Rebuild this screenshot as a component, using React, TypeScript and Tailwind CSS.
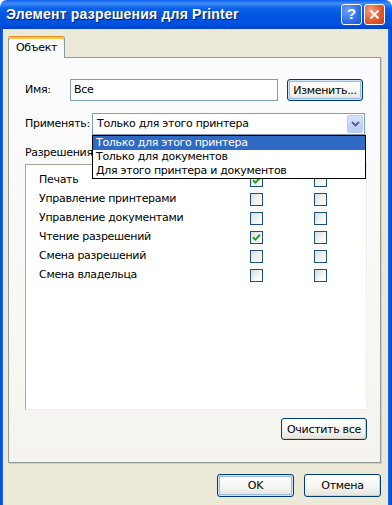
import React from 'react';

const rows = [
  { label: 'Печать', allow: true },
  { label: 'Управление принтерами', allow: false },
  { label: 'Управление документами', allow: false },
  { label: 'Чтение разрешений', allow: true },
  { label: 'Смена разрешений', allow: false },
  { label: 'Смена владельца', allow: false },
];

const options = ['Только для этого принтера', 'Только для документов', 'Для этого принтера и документов'];

const XpButton: React.FC<{ label: string; w: string; focused?: boolean }> = ({ label, w, focused }) => (
  <button
    type="button"
    className={`${w} h-[22px] rounded-[3px] border border-[#003C74] bg-[linear-gradient(to_bottom,#FFFFFF_0%,#F4F4F0_60%,#E3E2DA_100%)] text-[11px] text-black leading-none ${
      focused ? 'shadow-[inset_0_0_0_1px_#CEE7FF,inset_0_0_0_2px_#98B8EA]' : 'shadow-[inset_-1px_-1px_0_#D6D0C5]'
    }`}
  >
    {label}
  </button>
);

const CheckBox: React.FC<{ checked?: boolean }> = ({ checked }) => (
  <div className="w-[13px] h-[13px] border border-[#1C5180] bg-[linear-gradient(135deg,#DCDCD7_0%,#F5F5F3_60%,#FFFFFF_100%)] flex items-center justify-center">
    {checked && (
      <svg width="9" height="9" viewBox="0 0 9 9">
        <path d="M1 4.2 L3.4 6.6 L8 1.8" stroke="#21A121" strokeWidth="2" fill="none" />
      </svg>
    )}
  </div>
);

const App: React.FC = () => {
  return (
    <div className="w-[392px] h-[505px] overflow-hidden flex flex-col font-['DejaVu_Sans',sans-serif] text-[11px] tracking-[-0.3px] text-black select-none">
      {/* Title bar */}
      <div className="h-[29px] shrink-0 flex items-center pl-[6px] pr-[7px] rounded-t-[7px] bg-[linear-gradient(to_bottom,#0A5EEA_0%,#3F8CF8_12%,#0B63EA_28%,#0054E3_55%,#0051DE_85%,#0042C8_100%)]">
        <span className="flex-1 font-['Liberation_Sans',sans-serif] font-bold text-[14px] text-white [text-shadow:1px_1px_0_#0A1E6E] tracking-[0.2px]">
          Элемент разрешения для Printer
        </span>
        <div className="flex gap-[2px]">
          <div className="w-[21px] h-[21px] rounded-[3px] border border-white bg-[radial-gradient(circle_at_30%_30%,#6FA3F7_0%,#2E6CE8_60%,#1E54D2_100%)] flex items-center justify-center text-white font-bold text-[15px] font-['Liberation_Sans',sans-serif]">
            ?
          </div>
          <div className="w-[21px] h-[21px] rounded-[3px] border border-white bg-[radial-gradient(circle_at_30%_30%,#F0A080_0%,#E25A2C_55%,#C9401A_100%)] flex items-center justify-center">
            <svg width="11" height="11" viewBox="0 0 11 11">
              <path d="M1.5 1.5 L9.5 9.5 M9.5 1.5 L1.5 9.5" stroke="white" strokeWidth="2.2" />
            </svg>
          </div>
        </div>
      </div>

      {/* Body */}
      <div className="flex flex-1 min-h-0">
        <div className="w-[3px] bg-[linear-gradient(to_right,#0844C8,#166AEE)]" />
        <div className="flex-1 bg-[#ECE9D8] pl-[5px] pr-[5px] pt-[7px] flex flex-col">
          {/* Tab strip */}
          <div className="flex h-[21px]">
            <div className="relative z-10 w-[57px] h-[22px] border border-b-0 border-[#919B9C] border-t-[#E68B2C] rounded-t-[3px] bg-[#FCFCFE] shadow-[inset_0_2px_0_#FFC83C] flex items-center justify-center pt-[2px]">
              Объект
            </div>
          </div>

          {/* Tab panel */}
          <div className="relative w-[373px] h-[406px] border border-[#919B9C] bg-[linear-gradient(to_bottom,#FCFCFE_0%,#F7F7F3_70%,#F4F3EE_100%)] shadow-[1px_1px_0_#D0CEBF] pl-[16px] pt-[21px]">
            {/* Name row */}
            <div className="flex items-center h-[22px]">
              <span className="w-[45px]">Имя:</span>
              <div className="w-[208px] h-[22px] border border-[#7F9DB9] bg-white flex items-center pl-[3px]">Все</div>
              <div className="ml-[9px]">
                <XpButton label="Изменить..." w="w-[76px]" focused />
              </div>
            </div>

            {/* Apply row */}
            <div className="flex items-center h-[22px] mt-[12px]">
              <span className="w-[67px]">Применять:</span>
              <div className="w-[273px] h-[22px] border border-[#7F9DB9] bg-white flex items-center pl-[4px] pr-[1px]">
                <span className="flex-1">Только для этого принтера</span>
                <div className="w-[16px] h-[18px] rounded-[2px] bg-[linear-gradient(to_bottom,#D8E4FC,#B6CBF7)] border border-[#B9CCF3] flex items-center justify-center">
                  <svg width="9" height="6" viewBox="0 0 9 6">
                    <path d="M1 1 L4.5 4.5 L8 1" stroke="#4D6185" strokeWidth="1.8" fill="none" />
                  </svg>
                </div>
              </div>
            </div>

            {/* Permissions */}
            <div className="mt-[11px] h-[13px] leading-[13px]">Разрешения</div>
            <div className="mt-[5px] w-[342px] h-[246px] border border-[#ACA899] border-r-[#F1EFE2] border-b-[#F1EFE2] bg-white pt-[6px] pl-[13px]">
              {rows.map((r) => (
                <div key={r.label} className="flex items-center h-[19px]">
                  <span className="w-[211px]">{r.label}</span>
                  <CheckBox checked={r.allow} />
                  <div className="ml-[51px]">
                    <CheckBox />
                  </div>
                </div>
              ))}
            </div>

            <div className="flex justify-end w-[342px] mt-[8px]">
              <XpButton label="Очистить все" w="w-[86px]" />
            </div>

            {/* Open dropdown list */}
            <div className="absolute left-[83px] top-[77px] w-[274px] border border-black bg-white">
              {options.map((o, i) => (
                <div
                  key={o}
                  className={`h-[14px] leading-[14px] pl-[3px] ${i === 0 ? 'bg-[#316AC5] text-white' : ''}`}
                >
                  {o}
                </div>
              ))}
            </div>
          </div>

          {/* Dialog buttons */}
          <div className="flex justify-end gap-[10px] mt-[11px] w-[373px]">
            <XpButton label="OK" w="w-[77px] h-[23px]" focused />
            <XpButton label="Отмена" w="w-[77px] h-[23px]" />
          </div>
        </div>
        <div className="w-[4px] bg-[linear-gradient(to_right,#166AEE,#0844C8)]" />
      </div>
    </div>
  );
};

export default App;
